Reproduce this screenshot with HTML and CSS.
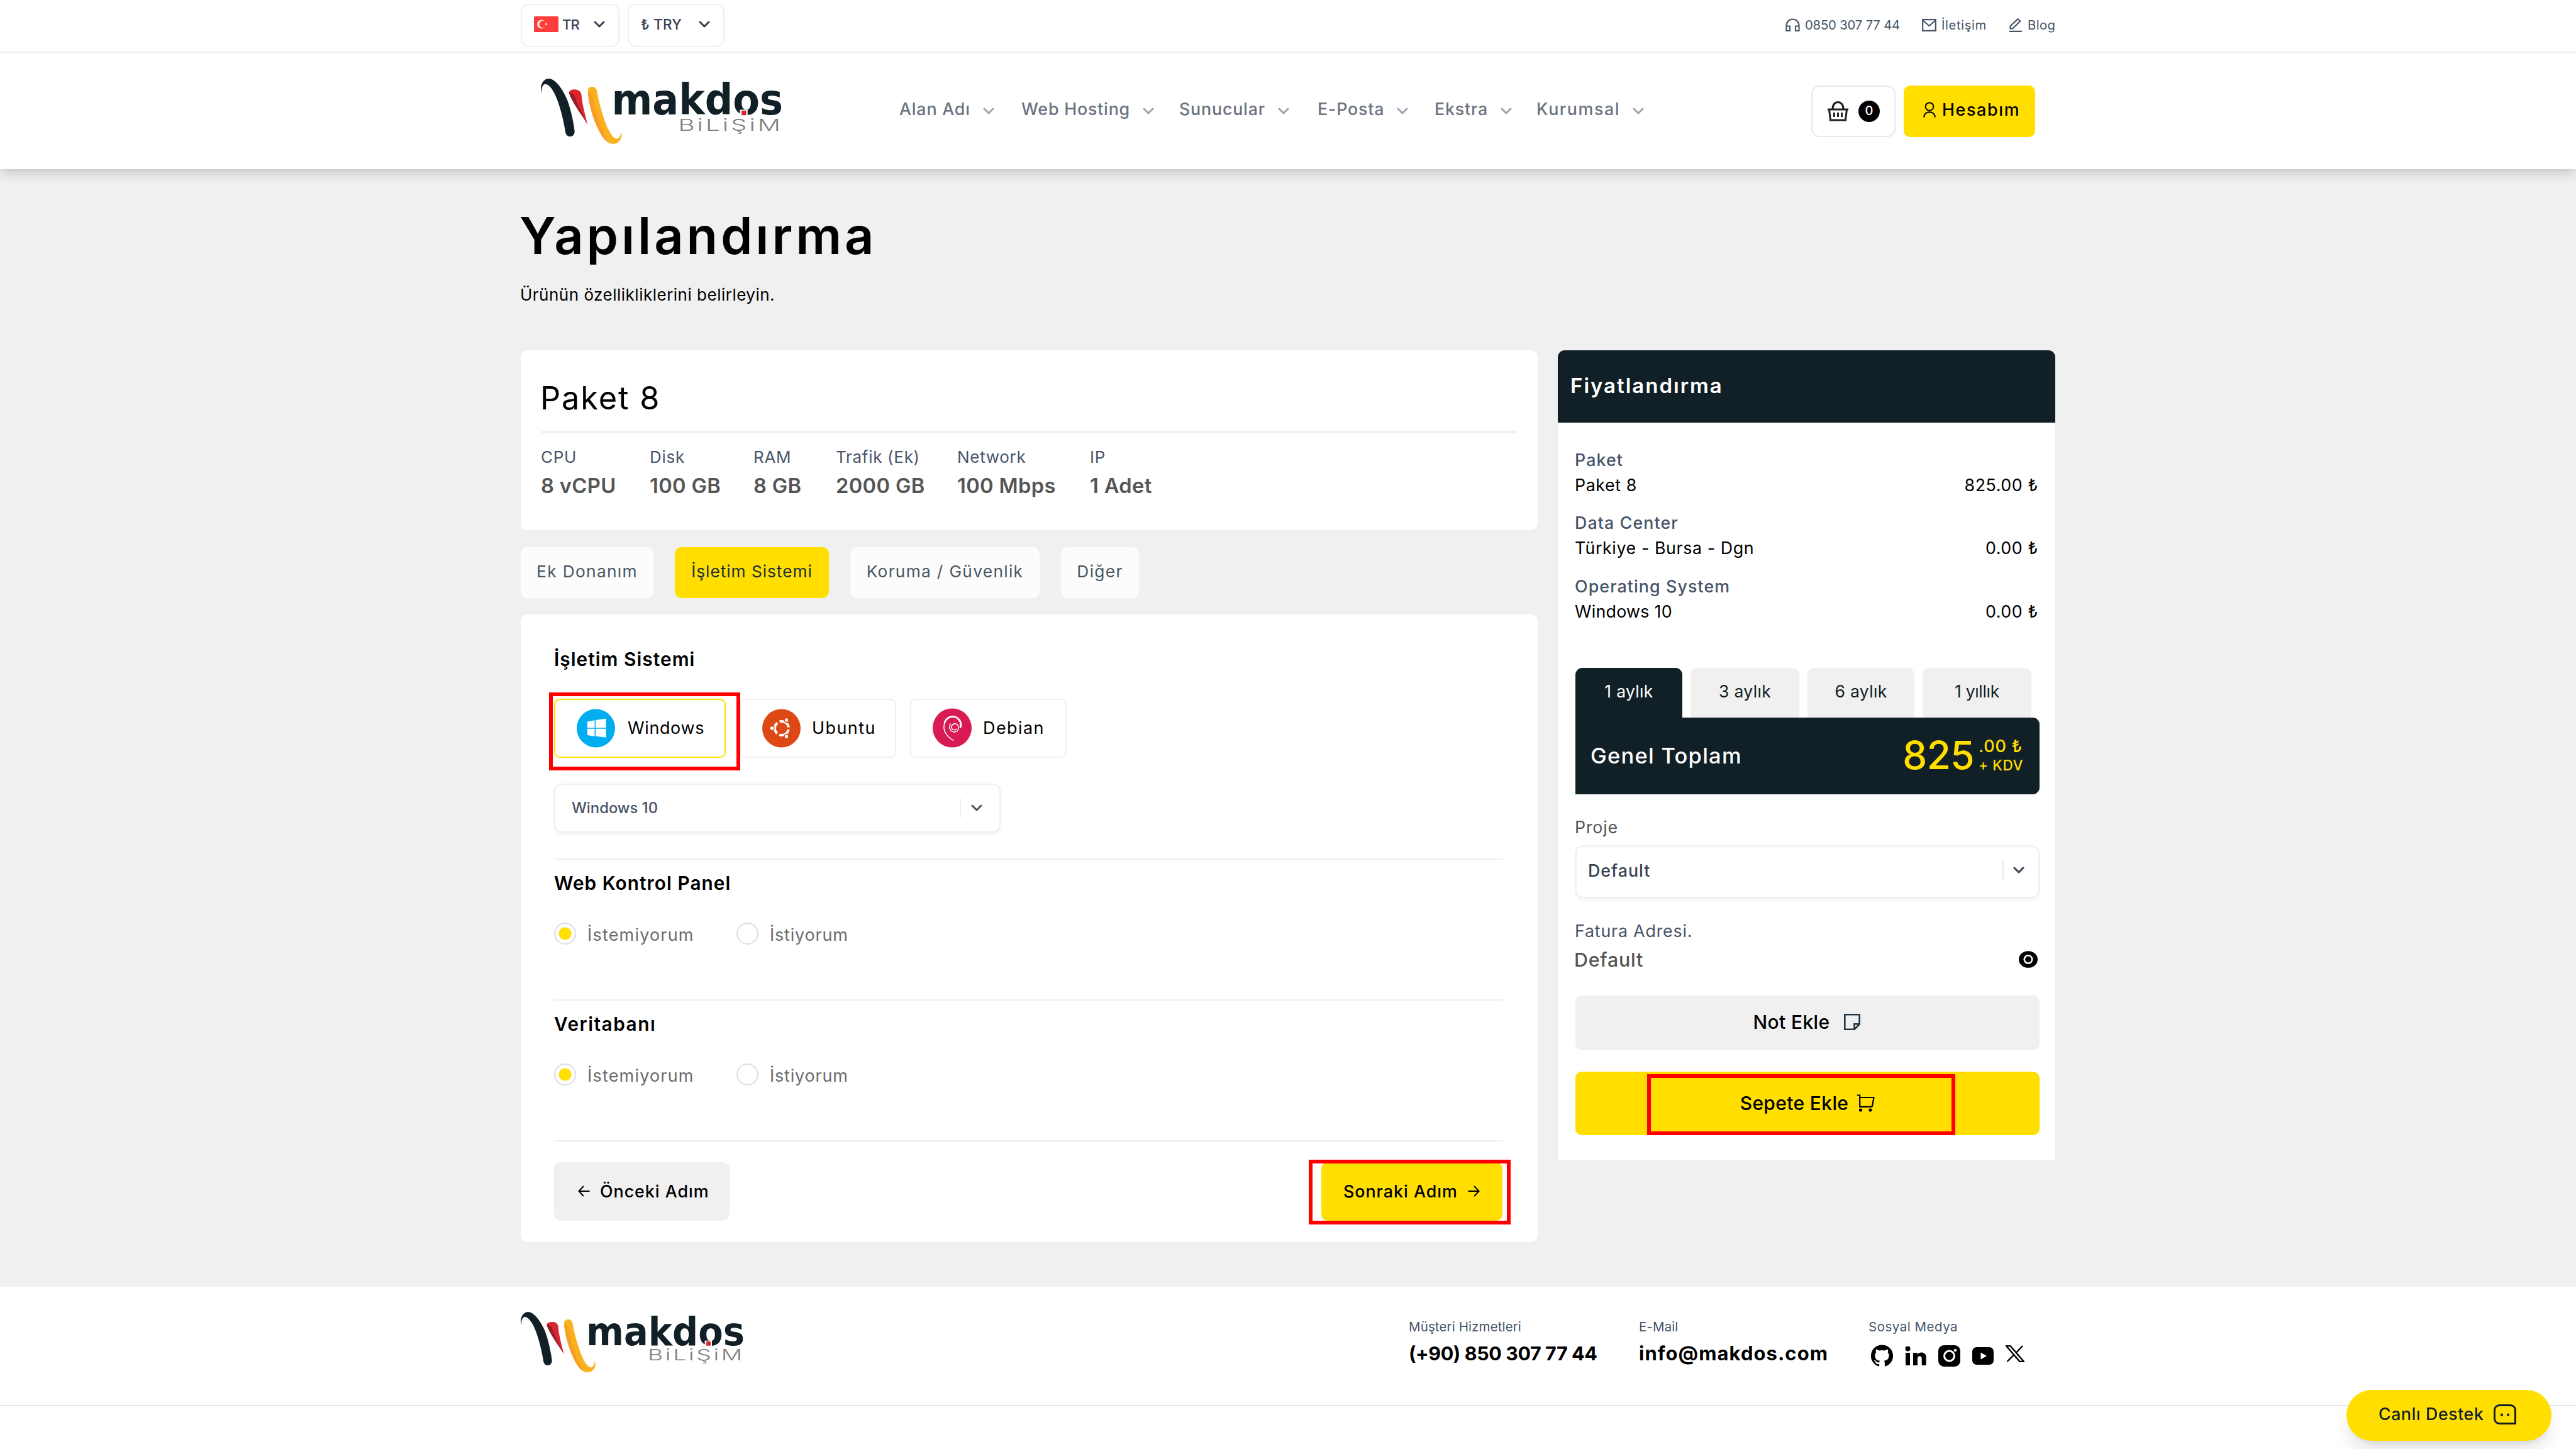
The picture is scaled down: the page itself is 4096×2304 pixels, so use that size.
FILE: index.html
```
<!DOCTYPE html>
<html lang="tr">
<head>
  <meta charset="UTF-8" />
  <meta name="viewport" content="width=device-width, initial-scale=1.0"/>
  <title>Makdos Bilişim - Yapılandırma</title>
  <link rel="stylesheet" href="styles.css">
</head>
<body>
  <!-- Shared symbols -->
  <svg class="symbols" width="0" height="0">
    <symbol id="chevron" viewBox="0 0 18 11"><path d="M2 2l7 7 7-7" fill="none" stroke="currentColor" stroke-width="3" stroke-linecap="round" stroke-linejoin="round"/></symbol>
    <symbol id="logo-mark" viewBox="84 168 360 288">
      <path fill="#111f26" d="M84 228C80 195 95 168 120 168C150 170 180 215 200 260C218 310 228 360 233 400C233 415 224 423 214 423C202 423 194 416 192 402C183 345 165 275 145 235C130 205 115 192 104 192C92 192 87 210 86 228Z"/>
      <path fill="#dc2430" d="M208 230C208 220 222 215 238 216C255 218 262 228 263 240C266 280 280 330 290 370C260 320 222 270 208 230Z"/>
      <path fill="#931f2a" d="M208 230C214 228 226 232 232 242C246 280 268 330 288 364C262 325 220 270 208 230Z"/>
      <path fill="#f9b21d" d="M291 222C291 210 300 204 310 204C322 204 329 212 331 222C340 270 355 330 378 385C395 420 408 433 420 433C432 430 436 415 438 402C446 430 430 456 402 456C370 456 345 410 325 365C305 315 293 260 291 222Z"/>
      <path fill="#f99d26" d="M291 229C300 230 308 234 311 240C322 300 335 350 355 395C366 420 374 434 384 450C360 442 340 400 325 365C305 315 293 260 291 229Z"/>
    </symbol>
  </svg>

  <div class="topbar">
    <div class="container">
      <div class="picker lang">
        <svg class="flag" viewBox="0 0 39 25"><rect width="39" height="25" rx="1.5" fill="#fd3c3c"/><circle cx="12" cy="12.500" r="7" fill="#ffd9d9"/><circle cx="14.500" cy="12.500" r="5.600" fill="#fd3c3c"/><circle cx="19.500" cy="12.500" r="2" fill="#ffb0b0"/></svg>
        <span>TR</span>
        <svg class="chevron"><use href="#chevron"/></svg>
      </div>
      <div class="picker currency">
        <span>₺ TRY</span>
        <svg class="chevron"><use href="#chevron"/></svg>
      </div>
      <div class="toplinks">
        <a class="phone"><svg width="23" height="22" viewBox="0 0 23 22" fill="none" stroke="currentColor" stroke-width="2.200"><path d="M1.500 19V11.500a10 10 0 0 1 20 0V19M1.500 12.500h5.500v7.500H1.500zM16 12.500h5.500v7.500H16z"/></svg>0850 307 77 44</a>
        <a class="contact"><svg width="23" height="20" viewBox="0 0 23 20" fill="none" stroke="currentColor" stroke-width="2.200"><path d="M1.200 1.200h20.600v17.600H1.200zM1.500 2.500l10 8.500 10-8.500"/></svg>İletişim</a>
        <a class="blog"><svg width="21" height="22" viewBox="0 0 21 22" fill="none" stroke="currentColor" stroke-width="2.200"><path d="M1.500 16.500v-4L13.500 1.200l3.800 3.600L5.200 16.500zM0 20.800h20"/></svg>Blog</a>
      </div>
    </div>
  </div>

  <header>
    <div class="container">
      <svg class="logo" viewBox="84 168 1068 288">
        <use href="#logo-mark" x="84" y="168" width="360" height="288"/>
        <text class="logo-name" x="396" y="327" textLength="756" lengthAdjust="spacingAndGlyphs">makdos</text>
        <rect x="962" y="305" width="34" height="25" fill="#fff"/>
        <rect x="969" y="309" width="21" height="20" fill="#dc2430"/>
        <text class="logo-sub" x="690" y="399" textLength="462" lengthAdjust="spacingAndGlyphs">BiLiŞiM</text>
      </svg>
      <nav>
        <a>Alan Adı <svg class="chevron"><use href="#chevron"/></svg></a>
        <a>Web Hosting <svg class="chevron"><use href="#chevron"/></svg></a>
        <a>Sunucular <svg class="chevron"><use href="#chevron"/></svg></a>
        <a>E-Posta <svg class="chevron"><use href="#chevron"/></svg></a>
        <a>Ekstra <svg class="chevron"><use href="#chevron"/></svg></a>
        <a class="wide">Kurumsal <svg class="chevron"><use href="#chevron"/></svg></a>
      </nav>
      <div class="cart">
        <svg width="33" height="32" viewBox="0 0 33 32" fill="none" stroke="#1f1f27" stroke-width="3"><path d="M0 13h33M2.500 13l2 17h24l2-17M8 12c0-14 17-14 17 0M10.500 18v7M16.500 18v7M22.500 18v7"/></svg>
        <span class="count">0</span>
      </div>
      <a class="account">
        <svg width="20" height="25" viewBox="0 0 20 25" fill="none" stroke="#000" stroke-width="2"><circle cx="10" cy="7.500" r="6.300"/><path d="M1.200 24.500c0-11 17.600-11 17.600 0"/></svg>
        Hesabım
      </a>
    </div>
  </header>

  <main>
    <div class="container">
      <h1>Yapılandırma</h1>
      <p class="lead">Ürünün özellikliklerini belirleyin.</p>

      <div class="columns">
        <div class="left">
          <section class="card package">
            <h2>Paket 8</h2>
            <hr>
            <dl>
              <div><dt>CPU</dt><dd>8 vCPU</dd></div>
              <div><dt>Disk</dt><dd>100 GB</dd></div>
              <div><dt>RAM</dt><dd>8 GB</dd></div>
              <div><dt>Trafik (Ek)</dt><dd>2000 GB</dd></div>
              <div><dt>Network</dt><dd>100 Mbps</dd></div>
              <div><dt>IP</dt><dd>1 Adet</dd></div>
            </dl>
          </section>

          <div class="tabs">
            <a class="tab hardware">Ek Donanım</a>
            <a class="tab system active">İşletim Sistemi</a>
            <a class="tab security">Koruma / Güvenlik</a>
            <a class="tab other">Diğer</a>
          </div>

          <section class="card options">
            <h3>İşletim Sistemi</h3>
            <div class="systems">
              <div class="os selected">
                <svg width="61" height="62" viewBox="0 0 61 62"><circle cx="30.500" cy="31" r="30.500" fill="#00adef"/><path fill="#fff" d="M17 20.500l11.500-2.200v12H17zM30 18l16.500-2.500v14.800H30zM17 31.800h11.500v12L17 42zM30 31.800h16.500v14L30 43.600z"/></svg>
                Windows
                <span class="mark mark-os"></span>
              </div>
              <div class="os wide">
                <svg width="61" height="62" viewBox="0 0 61 62"><circle cx="30.500" cy="31" r="30.500" fill="#dd4814"/><circle cx="31" cy="31" r="11" fill="none" stroke="#fff" stroke-width="4" stroke-dasharray="19 4.040" stroke-dashoffset="-2"/><g fill="#fff" stroke="#dd4814" stroke-width="1.500"><circle cx="15.500" cy="31" r="3.400"/><circle cx="38.500" cy="18" r="3.400"/><circle cx="38.500" cy="44" r="3.400"/></g></svg>
                Ubuntu
              </div>
              <div class="os wide">
                <svg width="62" height="63" viewBox="0 0 62 63"><circle cx="31" cy="31.500" r="31" fill="#d91b55"/><path fill="none" stroke="#fff" stroke-linecap="round" stroke-width="1.500" d="M38 33c-3 3-7 2-8-2-1-5 5-8 9-5 4 4 2 11-4 12-7 0-10-7-7-13M33 51c-9-4-16-14-15-23 1-10 9-15 17-14 8 2 12 9 10 16"/><path fill="none" stroke="#fff" stroke-linecap="round" stroke-width="2.600" d="M19 23c3-9 12-12 19-8 6 4 8 9 6 15"/></svg>
                Debian
              </div>
            </div>
            <div class="select version">
              <span>Windows 10</span>
              <i></i>
              <svg class="chevron"><use href="#chevron"/></svg>
            </div>
            <hr>
            <h3>Web Kontrol Panel</h3>
            <div class="radios">
              <label class="radio checked"><i></i><span>İstemiyorum</span></label>
              <label class="radio"><i></i><span>İstiyorum</span></label>
            </div>
            <hr>
            <h3 class="database">Veritabanı</h3>
            <div class="radios">
              <label class="radio checked"><i></i><span>İstemiyorum</span></label>
              <label class="radio"><i></i><span>İstiyorum</span></label>
            </div>
            <hr>
            <div class="steps">
              <a class="step prev">
                <svg width="19" height="18" viewBox="0 0 19 18" fill="none" stroke="#000" stroke-width="2"><path d="M9 1L1.500 9 9 17M1.500 9H18.500"/></svg>
                Önceki Adım
              </a>
              <a class="step next">
                Sonraki Adım
                <svg width="19" height="18" viewBox="0 0 19 18" fill="none" stroke="#000" stroke-width="2"><path d="M10 1l7.500 8L10 17M17.500 9H.500"/></svg>
                <span class="mark mark-next"></span>
              </a>
            </div>
          </section>
        </div>

        <aside>
          <h3>Fiyatlandırma</h3>
          <div class="pricing">
            <div class="line"><b>Paket</b><span>Paket 8</span><span>825.00 ₺</span></div>
            <div class="line"><b>Data Center</b><span>Türkiye - Bursa - Dgn</span><span>0.00 ₺</span></div>
            <div class="line"><b>Operating System</b><span class="narrow">Windows 10</span><span>0.00 ₺</span></div>

            <div class="periods">
              <a class="active">1 aylık</a>
              <a>3 aylık</a>
              <a>6 aylık</a>
              <a class="year">1 yıllık</a>
            </div>
            <div class="total">
              <span class="total-name">Genel Toplam</span>
              <span class="total-price">825</span>
              <span class="total-extra"><span>.00 ₺</span><small>+ KDV</small></span>
            </div>

            <p class="label project-label">Proje</p>
            <div class="select project">
              <span>Default</span>
              <i></i>
              <svg class="chevron"><use href="#chevron"/></svg>
            </div>

            <p class="label">Fatura Adresi.</p>
            <div class="address">
              Default
              <svg width="30" height="27" viewBox="0 0 30 27"><ellipse cx="15" cy="13.500" rx="15" ry="13.300"/><circle cx="15" cy="13.500" r="6.200" fill="none" stroke="#fff" stroke-width="2.600"/></svg>
            </div>

            <a class="button note">
              Not Ekle
              <svg width="26" height="26" viewBox="0 0 26 26" fill="none" stroke="#1f3442" stroke-width="2.600"><path d="M1.300 1.300h23.400v15.200l-8 8.200H1.300zM16.500 24.500v-8.200h8"/></svg>
            </a>
            <a class="button add">
              Sepete Ekle
              <svg width="28" height="28" viewBox="0 0 28 28" fill="none" stroke="#000" stroke-width="2.200"><path d="M0 1.500h4.200v18.300h19.500M4.200 5h22.300l-2.700 14.800"/><circle cx="5.500" cy="25" r="2.600" fill="#000" stroke="none"/><circle cx="21" cy="25" r="2.600" fill="#000" stroke="none"/></svg>
              <span class="mark mark-add"></span>
            </a>
          </div>
        </aside>
      </div>
    </div>
  </main>

  <footer>
    <div class="container">
      <svg class="logo" viewBox="84 168 1068 288">
        <use href="#logo-mark" x="84" y="168" width="360" height="288"/>
        <text class="logo-name" x="396" y="327" textLength="756" lengthAdjust="spacingAndGlyphs">makdos</text>
        <rect x="962" y="305" width="34" height="25" fill="#fff"/>
        <rect x="969" y="309" width="21" height="20" fill="#dc2430"/>
        <text class="logo-sub" x="690" y="399" textLength="462" lengthAdjust="spacingAndGlyphs">BiLiŞiM</text>
      </svg>
      <div class="contacts">
        <div><p>Müşteri Hizmetleri</p><strong class="number">(+90) 850 307 77 44</strong></div>
        <div><p>E-Mail</p><strong>info@makdos.com</strong></div>
        <div>
          <p class="wide">Sosyal Medya</p>
          <div class="social">
            <svg width="35" height="35" viewBox="0 0 24 24"><path d="M12 .3a12 12 0 0 0-3.800 23.400c.6.100.8-.3.800-.6v-2c-3.300.7-4-1.600-4-1.600-.6-1.400-1.400-1.800-1.400-1.800-1-.7.1-.7.1-.7 1.200.1 1.900 1.200 1.900 1.200 1 1.800 2.800 1.300 3.500 1 0-.8.4-1.300.7-1.600-2.700-.3-5.500-1.300-5.500-6 0-1.200.5-2.300 1.300-3.100-.2-.4-.6-1.600 0-3.200 0 0 1-.3 3.400 1.200a11.500 11.500 0 0 1 6 0c2.300-1.500 3.300-1.200 3.300-1.200.6 1.600.2 2.800 0 3.200.9.800 1.300 1.900 1.300 3.200 0 4.600-2.800 5.600-5.500 5.900.5.400.9 1 .9 2.200v3.300c0 .3.100.7.800.6A12 12 0 0 0 12 .3"/></svg>
            <svg width="34" height="33" viewBox="0 0 34 33"><circle cx="4.500" cy="5.500" r="4"/><path d="M1 12h7v20H1zM13 12h6.700v2.800c3-5 14-5 14 4.700V32h-7V21c0-5-6.700-5-6.700 0v11h-7z"/></svg>
            <svg width="35" height="34" viewBox="0 0 35 34"><rect width="35" height="34" rx="9"/><circle cx="17.500" cy="17" r="8" fill="none" stroke="#fff" stroke-width="3"/><circle cx="27" cy="8" r="2.300" fill="#fff"/></svg>
            <svg width="34" height="28" viewBox="0 0 34 28"><rect width="34" height="28" rx="7"/><path d="M13.500 8.500v11l9.500-5.500z" fill="#fff"/></svg>
            <svg class="x" width="30" height="27" viewBox="0 0 30 27"><path d="M1 1h6.500L29 26h-6.500zM27 1L16.500 12.300M13 15.500L2.500 26" fill="none" stroke="#000" stroke-width="2.400"/></svg>
          </div>
        </div>
      </div>
    </div>
  </footer>

  <a class="chat">
    Canlı Destek
    <svg width="36" height="32" viewBox="0 0 36 32" fill="none" stroke="#101f28" stroke-width="3"><path d="M9 1.500h18a7.500 7.500 0 0 1 7.500 7.500v21.500H9A7.500 7.500 0 0 1 1.500 23V9A7.500 7.500 0 0 1 9 1.500z"/><path d="M11 16.500h4M21 16.500h4" stroke-width="3.600"/></svg>
  </a>
</body>
</html>
```
FILE: styles.css
```
* {
  box-sizing: border-box;
}

body {
  margin: 0;
  height: 2304px;
  overflow: hidden;
  background: #fff;
  color: #000;
  font-family: "Inter", sans-serif;
  font-size: 26.8px;
  letter-spacing: 0.03em;
  white-space: nowrap;
}

h1, h2, h3, p, dl, dd {
  margin: 0;
}

svg {
  display: block;
  flex-shrink: 0;
}

.symbols {
  position: absolute;
}

.container {
  display: flex;
  width: 2440px;
  margin: 0 auto;
}

.chevron {
  width: 18px;
  height: 11px;
}

/* Logo */
.logo-name {
  font-family: "DejaVu Sans", sans-serif;
  font-weight: bold;
  font-size: 188px;
  letter-spacing: 0;
  fill: #111f26;
}

.logo-sub {
  font-size: 72px;
  font-weight: 300;
  letter-spacing: 0.1em;
  fill: #808080;
}

/* Top bar */
.topbar {
  position: relative;
  z-index: 1;
  height: 85px;
  border-bottom: 4px solid #f1f2f4;
  background: #fff;
}

.topbar .container {
  height: 81px;
  align-items: center;
}

.picker {
  display: flex;
  align-items: center;
  height: 69px;
  padding: 0 21px 4px 19px;
  border: 2px solid #efefef;
  border-radius: 13px;
  font-size: 22px;
  font-weight: 500;
  letter-spacing: -0.04em;
  color: #374151;
}

.lang {
  width: 157px;
  margin-right: 13px;
}

.currency {
  width: 154px;
  font-size: 22.5px;
  letter-spacing: 0.01em;
}

.flag {
  width: 39px;
  height: 25px;
  margin-right: 6px;
}

.picker .chevron {
  margin-left: auto;
}

.toplinks {
  display: flex;
  margin-left: auto;
  padding-bottom: 2px;
  font-size: 20.3px;
  color: #475569;
}

.toplinks a {
  display: flex;
  align-items: center;
  gap: 8px;
}

.phone {
  width: 217px;
  letter-spacing: -0.009em;
}

.contact {
  width: 139px;
  letter-spacing: 0.03em;
}

.blog {
  width: 73px;
  letter-spacing: 0.02em;
}

/* Header */
header {
  position: relative;
  height: 184px;
  background: #fff;
  box-shadow: 0 2px 22px rgba(0, 0, 0, 0.25);
}

header .container {
  height: 100%;
  align-items: center;
  padding: 0 32px;
}

header .logo {
  width: 385px;
  height: 104px;
}

nav {
  display: grid;
  grid-template-columns: 194px 251px 220px 186px 162px 180px;
  margin-left: 185px;
  padding-bottom: 8px;
  font-weight: 500;
  color: #6b7280;
}

nav a {
  display: flex;
  align-items: center;
  gap: 20px;
}

nav .wide {
  letter-spacing: 0.06em;
}

nav .chevron {
  margin-top: 6px;
  color: #9ca3af;
}

.cart {
  display: flex;
  align-items: center;
  gap: 16px;
  width: 134px;
  height: 82px;
  margin: 0 13px 0 auto;
  padding-left: 24px;
  border: 2px solid #e8e8ec;
  border-radius: 13px;
}

.count {
  width: 34px;
  height: 34px;
  border-radius: 50%;
  background: #000;
  color: #fff;
  font-size: 20px;
  font-weight: 500;
  line-height: 33px;
  letter-spacing: 0;
  text-align: center;
}

.account {
  display: flex;
  align-items: center;
  gap: 10px;
  width: 209px;
  height: 82px;
  padding: 0 0 6px 31px;
  border-radius: 10px;
  background: #ffde00;
  font-weight: 500;
  letter-spacing: 0.062em;
}

/* Content */
main {
  height: 1777px;
  padding-top: 56px;
  background: #f0f0f0;
}

main > .container {
  display: block;
}

h1 {
  margin-left: -2px;
  font-size: 81px;
  font-weight: 600;
  line-height: 100px;
  letter-spacing: 0.06em;
}

.lead {
  margin: 24px 0 68px -1px;
  font-size: 26px;
  line-height: 40px;
  letter-spacing: 0.019em;
}

.columns {
  display: grid;
  grid-template-columns: 1617px 791px;
  gap: 32px;
  align-items: start;
}

.card {
  background: #fff;
  border-radius: 11px;
}

hr {
  margin: 0;
  border: 0;
  background: #f0f0f0;
}

.package {
  height: 286px;
  padding: 44px 33px 0;
}

h2 {
  margin-left: -2px;
  font-size: 50.5px;
  font-weight: 400;
  line-height: 64px;
  letter-spacing: 0.036em;
}

.package hr {
  height: 4px;
  margin: 20px 0;
}

.package dl {
  display: grid;
  grid-template-columns: 173px 165px 131px 193px 211px 150px;
}

.package dt {
  margin-left: -1px;
  font-size: 26px;
  line-height: 36px;
  letter-spacing: 0.027em;
  color: #475569;
}

.package dd {
  margin: 7px 0 0 -1px;
  font-size: 32.7px;
  font-weight: 600;
  line-height: 40px;
  letter-spacing: 0.01em;
  color: #555;
}

.tabs {
  display: flex;
  gap: 34px;
  margin: 27px 0 26px;
}

.tab {
  display: flex;
  align-items: center;
  justify-content: center;
  height: 81px;
  padding-bottom: 5px;
  border-radius: 11px;
  background: #fcfcfc;
  font-size: 26.3px;
  letter-spacing: 0.05em;
  color: #475763;
}

.tab.active {
  background: #ffde00;
  color: #1c2f38;
  letter-spacing: 0.036em;
}

.hardware {
  width: 211px;
}

.system {
  width: 245px;
}

.security {
  width: 301px;
}

.other {
  width: 124px;
}

.options {
  padding: 51px 56px 34px 53px;
}

.options h3 {
  font-size: 29.8px;
  font-weight: 600;
  line-height: 40px;
  letter-spacing: 0.035em;
}

.options .database {
  letter-spacing: 0.05em;
}

.systems {
  display: flex;
  gap: 22px;
  margin: 43px 0 41px;
}

.os {
  position: relative;
  display: flex;
  align-items: center;
  gap: 20px;
  width: 249px;
  height: 94px;
  padding: 0 0 1px 34px;
  border: 2px solid #f0f0f0;
  border-radius: 9px;
  font-size: 27px;
  letter-spacing: 0.023em;
}

.os.wide {
  gap: 18px;
  letter-spacing: 0.052em;
}

.os.selected {
  width: 273px;
  border-color: #ffde00;
}

/* Red highlight frames */
.mark {
  position: absolute;
  z-index: 1;
  border: 6px solid #f00;
}

.mark-os {
  top: -12px;
  left: -10px;
  width: 304px;
  height: 124px;
}

.mark-next {
  top: -4px;
  left: -20px;
  width: 321px;
  height: 103px;
}

.mark-add {
  top: 4px;
  left: 114px;
  width: 490px;
  height: 97px;
}

.select {
  display: flex;
  align-items: center;
  border: 2px solid #efefef;
  border-radius: 12px;
  box-shadow: 0 3px 5px rgba(0, 0, 0, 0.05);
  font-weight: 500;
}

.select i {
  margin-left: auto;
  background: #f0f0f0;
}

.version {
  width: 710px;
  height: 78px;
  margin-bottom: 41px;
  padding: 0 27px 1px 26px;
  font-size: 23.8px;
  letter-spacing: 0;
  color: #475569;
}

.version i {
  width: 2px;
  height: 32px;
  margin-right: 16px;
}

.options hr {
  height: 3px;
  margin-bottom: 16px;
  border-bottom: 1px solid #fafafa;
}

.radios {
  display: flex;
  margin: 43px 0 87px;
}

.radio {
  display: flex;
  align-items: center;
  gap: 18px;
  width: 290px;
  height: 35px;
  font-size: 27px;
  color: #6b6b6b;
  letter-spacing: 0.044em;
}

.radio + .radio {
  letter-spacing: 0.03em;
}

.radio span {
  padding-top: 3px;
}

.radio i {
  width: 35px;
  height: 35px;
  border: 2px solid #ddd;
  border-radius: 50%;
}

.radio.checked i {
  background: radial-gradient(circle, #ffde00 9.5px, #fff 10.5px);
}

.steps {
  display: flex;
  justify-content: space-between;
  padding-top: 16px;
}

.step {
  position: relative;
  display: flex;
  align-items: center;
  height: 93px;
  padding-bottom: 2px;
  border-radius: 10px;
  font-size: 26.8px;
  font-weight: 500;
  letter-spacing: 0.037em;
}

.prev {
  gap: 16px;
  width: 279px;
  padding-left: 38px;
  background: #f0f0f0;
}

.next {
  gap: 16px;
  width: 288px;
  padding-left: 35px;
  background: #ffde00;
}

/* Pricing */
aside {
  background: #fff;
  border-radius: 11px 11px 0 0;
}

aside h3 {
  height: 115px;
  padding-left: 20px;
  border-radius: 11px 11px 0 0;
  background: #111f26;
  color: #fff;
  font-size: 33px;
  font-weight: 600;
  line-height: 113px;
  letter-spacing: 0.06em;
}

.pricing {
  padding: 39px 25px 40px 28px;
}

.line {
  display: grid;
  grid-template-columns: 1fr auto;
  height: 80px;
  margin: 0 0 20.3px -1px;
  padding-right: 2px;
  line-height: 40px;
  letter-spacing: 0.022em;
}

.line b {
  grid-column: 1 / 3;
  font-weight: 500;
  letter-spacing: 0.041em;
  color: #475569;
}

.line .narrow {
  letter-spacing: 0.01em;
}

.periods {
  display: grid;
  grid-template-columns: 170px 173px 170px 173px;
  gap: 13px;
  padding-top: 50px;
}

.periods a {
  height: 79px;
  border-radius: 11px 11px 0 0;
  background: #f0f0f0;
  color: #111f26;
  font-size: 26.5px;
  line-height: 75px;
  letter-spacing: 0.013em;
  text-align: center;
}

.periods .year {
  letter-spacing: -0.012em;
}

.periods .active {
  background: #111f26;
  color: #fff;
}

.total {
  display: flex;
  align-items: center;
  height: 122px;
  padding: 0 25px 0 24px;
  border-radius: 0 11px 11px 0;
  background: #111f26;
  color: #fff;
  font-weight: 500;
}

.total-name {
  font-size: 34.5px;
  letter-spacing: 0.036em;
}

.total-price {
  margin: 0 7px 3px auto;
  font-size: 62px;
  letter-spacing: -0.01em;
  color: #ffde00;
}

.total-extra {
  display: flex;
  flex-direction: column;
  width: 72px;
  font-size: 27px;
  line-height: 30px;
  color: #ffde00;
}

.total-extra small {
  font-size: 22.7px;
  letter-spacing: 0.025em;
}

.label {
  margin: 33px 0 0 -1px;
  line-height: 40px;
  color: #475569;
}

.project-label {
  margin: 32px 0 9px -1px;
  color: #555;
}

.project {
  height: 84px;
  margin-bottom: -1px;
  padding: 0 22px 4px 18px;
  letter-spacing: 0.037em;
  color: #374151;
}

.project i {
  width: 4px;
  height: 34px;
  margin-right: 14px;
}

.address {
  display: flex;
  align-items: center;
  justify-content: space-between;
  height: 44px;
  margin: 4px 0 35px -2px;
  padding-right: 3px;
  font-size: 30.3px;
  font-weight: 500;
  color: #555;
}

.button {
  position: relative;
  display: flex;
  align-items: center;
  justify-content: center;
  border-radius: 10px;
  font-size: 30px;
  font-weight: 500;
  letter-spacing: 0.012em;
}

.note {
  gap: 23px;
  height: 87px;
  margin-bottom: 34px;
  padding: 0 2px 2px 0;
  background: #f0f0f0;
}

.add {
  gap: 14px;
  height: 101px;
  background: #ffde00;
}

/* Footer */
footer {
  height: 190px;
  border-bottom: 2px solid #e5e7eb;
  background: #fff;
}

footer .container {
  justify-content: space-between;
}

footer .logo {
  width: 356px;
  height: 96px;
  margin-top: 40px;
}

.contacts {
  display: grid;
  grid-template-columns: 366px 365px 297px;
  padding-top: 50px;
}

.contacts p {
  margin-bottom: 8px;
  font-size: 20.5px;
  line-height: 28px;
  letter-spacing: 0.006em;
  color: #475569;
}

.contacts .wide {
  letter-spacing: 0.025em;
}

.contacts strong {
  font-size: 31px;
  line-height: 40px;
  letter-spacing: 0.034em;
}

.contacts .number {
  font-size: 30.5px;
  letter-spacing: -0.014em;
}

.social {
  display: flex;
  align-items: center;
  gap: 19px;
  padding: 6px 0 0 4px;
}

.social .x {
  margin-bottom: 6px;
}

.chat {
  position: fixed;
  right: 39px;
  bottom: 13px;
  z-index: 2;
  display: flex;
  align-items: center;
  gap: 16px;
  width: 326px;
  height: 81px;
  padding: 0 0 4px 51px;
  border-radius: 41px;
  background: #ffde00;
  box-shadow: 0 20px 30px -6px rgba(0, 0, 0, 0.12), 0 8px 12px -8px rgba(0, 0, 0, 0.12);
  color: #101f28;
  font-size: 27px;
  font-weight: 500;
  letter-spacing: 0.017em;
}
```
